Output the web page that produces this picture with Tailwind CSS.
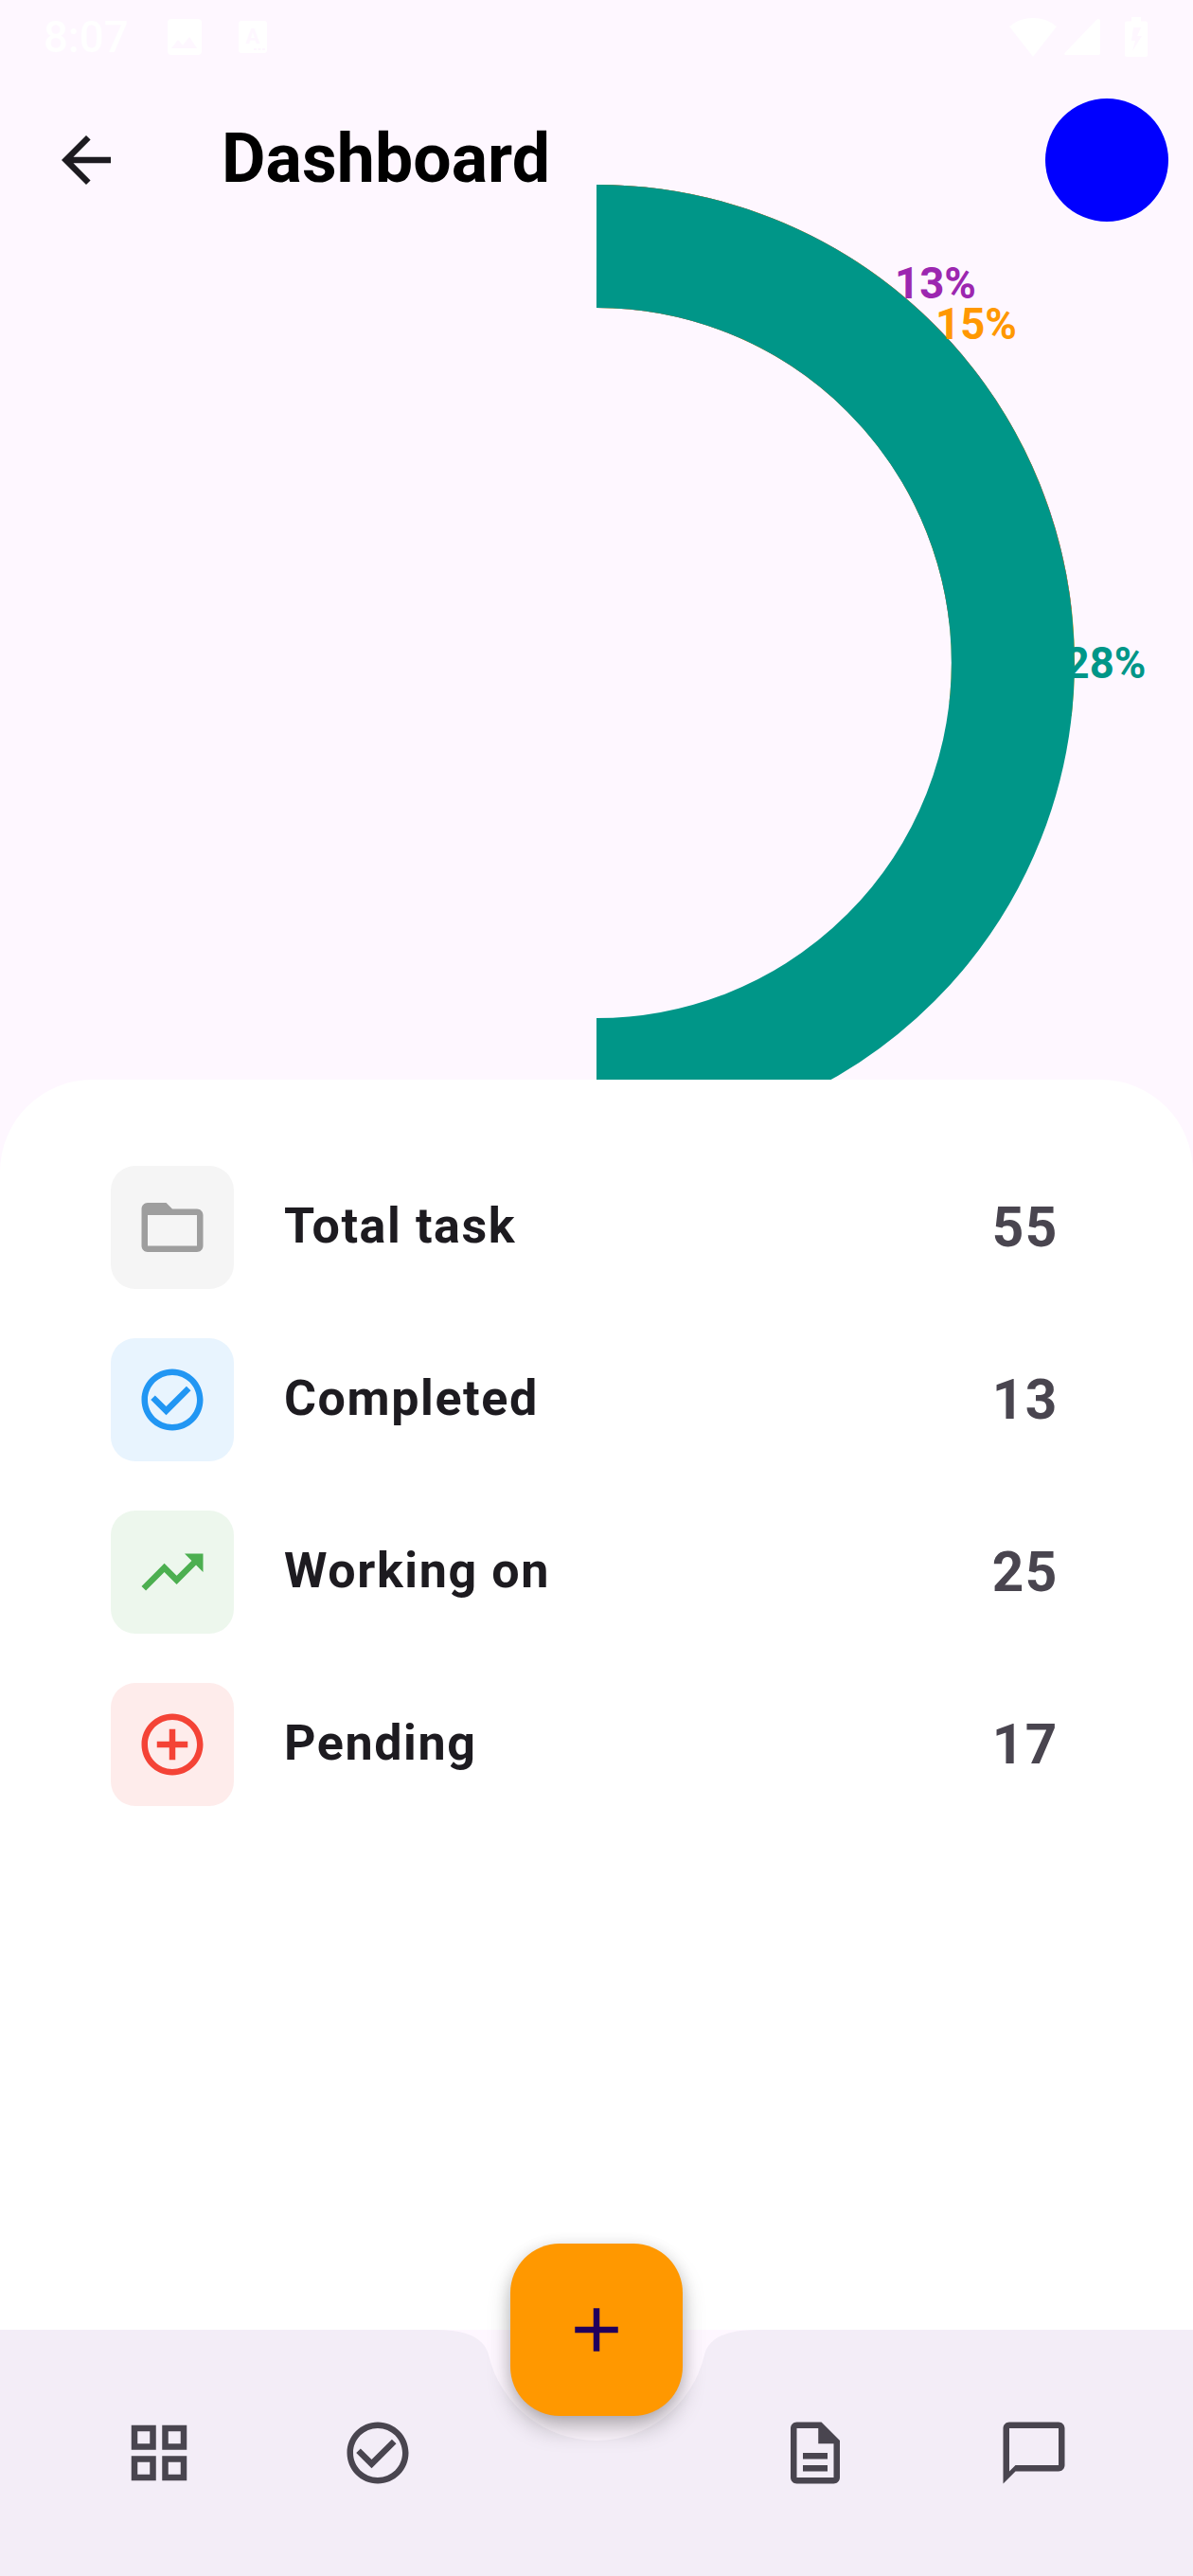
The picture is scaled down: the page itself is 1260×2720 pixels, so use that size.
<!DOCTYPE html>
<html lang="en">
<head>
<meta charset="utf-8">
<title>Dashboard</title>
<script src="https://cdn.jsdelivr.net/npm/@tailwindcss/browser@4"></script>
</head>
<body class="bg-[#fef7ff]">
<div class="flex h-[2720px] w-[1260px] flex-col overflow-hidden bg-[#fef7ff] font-['Roboto',sans-serif]">

  <!-- Status bar -->
  <div class="flex h-[78px] shrink-0 items-center text-white">
    <span class="ml-[46px] w-[92px] pt-[2px] text-[45.5px] leading-none font-medium">8:07</span>
    <svg class="ml-[39px] h-[38px] w-[36px]" viewBox="0 0 36 38" fill="currentColor"><path fill-rule="evenodd" d="M4 0h28a4 4 0 0 1 4 4v30a4 4 0 0 1-4 4H4a4 4 0 0 1-4-4V4a4 4 0 0 1 4-4zM4 31h27l-8-12-7 9-5-6z"/></svg>
    <svg class="ml-[39px] h-[34px] w-[30px]" viewBox="0 0 30 34"><rect width="30" height="34" rx="3" fill="#fff"/><text x="15" y="24" text-anchor="middle" font-family="Roboto, sans-serif" font-size="22" font-weight="700" fill="#fef7ff">A</text><path d="M16 29h3v2h-3zM20.500 29h3v2h-3zM25 29h3v2h-3z" fill="#fef7ff"/></svg>
    <svg class="ml-[784px] h-[41px] w-[50px]" viewBox="0 0 50 41" fill="currentColor"><path d="M25 41L0 9C14-3 36-3 50 9z"/></svg>
    <svg class="ml-[8px] h-[38px] w-[38px]" viewBox="0 0 38 38" fill="currentColor"><path d="M36 0q2 0 2 2v34q0 2-2 2H2q-3 0-1-2.500L34 1q1-1 2-1z"/></svg>
    <svg class="ml-[26px] h-[42px] w-[24px]" viewBox="0 0 24 42" fill="currentColor"><path fill-rule="evenodd" d="M7 0h10v4.500h5q2 0 2 2V40q0 2-2 2H2q-2 0-2-2V6.500q0-2 2-2h5zM9 11L7 25h4L8 36l10-16h-5l4-9z"/></svg>
  </div>

  <!-- App bar -->
  <header class="flex h-[182px] shrink-0 items-center pr-[26px] pl-[52px]">
    <svg class="size-[78px] fill-[#1d1b20]" viewBox="0 0 24 24"><path d="M20 11H7.830l5.590-5.590L12 4l-8 8 8 8 1.410-1.410L7.830 13H20v-2z"/></svg>
    <h1 class="ml-[104px] flex-1 pb-[3px] text-[71.500px] leading-none font-bold tracking-[0.1px] text-black">Dashboard</h1>
    <div class="size-[130px] rounded-full bg-[#0000ff]"></div>
  </header>

  <!-- Ring chart: each arc starts at twelve o'clock, the largest is drawn last -->
  <section class="h-[880px] shrink-0">
    <svg class="block h-[880px] w-[1260px] overflow-visible" viewBox="0 0 1260 880">
      <g font-family="Roboto, sans-serif" font-size="45.500" font-weight="700" text-anchor="middle">
        <path d="M630 0A440 440 0 0 1 1067.200 390.500" fill="none" stroke="#9c27b0" stroke-width="130"/>
        <path d="M630 0A440 440 0 0 1 1067.200 489" fill="none" stroke="#ff9800" stroke-width="130"/>
        <path d="M630 0A440 440 0 0 1 630 880" fill="none" stroke="#009688" stroke-width="130"/>
        <text x="988" y="54.700" fill="#9c27b0">13%</text>
        <text x="1031" y="98" fill="#ff9800">15%</text>
        <text x="1167.500" y="455.700" fill="#009688">28%</text>
      </g>
    </svg>
  </section>

  <!-- Summary sheet -->
  <main class="relative flex h-[1320px] shrink-0 flex-col gap-[52px] rounded-t-[97.500px] bg-white pt-[91px] pr-[142px] pl-[117px]">
    <div class="flex items-center">
      <div class="flex size-[130px] items-center justify-center rounded-[26px] bg-[#f5f5f5]">
        <svg class="size-[78px] fill-[#9e9e9e]" viewBox="0 0 24 24"><path d="M20 6h-8l-2-2H4c-1.100 0-1.990.9-1.990 2L2 18c0 1.100.9 2 2 2h16c1.100 0 2-.9 2-2V8c0-1.100-.9-2-2-2zm0 12H4V8h16v10z"/></svg>
      </div>
      <span class="ml-[53px] flex-1 pb-[2px] text-[52px] leading-none font-bold tracking-[1.6px] text-[#1d1b20]">Total task</span>
      <span class="text-[58.500px] leading-none font-bold tracking-[1.6px] text-[#49454f]">55</span>
    </div>
    <div class="flex items-center">
      <div class="flex size-[130px] items-center justify-center rounded-[26px] bg-[#e8f4fe]">
        <svg class="size-[78px] fill-[#2196f3]" viewBox="0 0 24 24"><path d="M16.590 7.580L10 14.170l-3.590-3.580L5 12l5 5 8-8zM12 2C6.480 2 2 6.480 2 12s4.480 10 10 10 10-4.480 10-10S17.520 2 12 2zm0 18c-4.420 0-8-3.580-8-8s3.580-8 8-8 8 3.580 8 8-3.580 8-8 8z"/></svg>
      </div>
      <span class="ml-[53px] flex-1 pb-[2px] text-[52px] leading-none font-bold tracking-[1.6px] text-[#1d1b20]">Completed</span>
      <span class="text-[58.500px] leading-none font-bold tracking-[1.6px] text-[#49454f]">13</span>
    </div>
    <div class="flex items-center">
      <div class="flex size-[130px] items-center justify-center rounded-[26px] bg-[#edf7ed]">
        <svg class="size-[78px] fill-[#4caf50]" viewBox="0 0 24 24"><path d="M16 6l2.290 2.290-4.880 4.880-4-4L2 16.590 3.410 18l6-6 4 4 6.300-6.290L22 12V6z"/></svg>
      </div>
      <span class="ml-[53px] flex-1 pb-[2px] text-[52px] leading-none font-bold tracking-[1.6px] text-[#1d1b20]">Working on</span>
      <span class="text-[58.500px] leading-none font-bold tracking-[1.6px] text-[#49454f]">25</span>
    </div>
    <div class="flex items-center">
      <div class="flex size-[130px] items-center justify-center rounded-[26px] bg-[#feeceb]">
        <svg class="size-[78px] fill-[#f44336]" viewBox="0 0 24 24"><path d="M13 7h-2v4H7v2h4v4h2v-4h4v-2h-4V7zm-1-5C6.480 2 2 6.480 2 12s4.480 10 10 10 10-4.480 10-10S17.520 2 12 2zm0 18c-4.410 0-8-3.590-8-8s3.590-8 8-8 8 3.590 8 8-3.590 8-8 8z"/></svg>
      </div>
      <span class="ml-[53px] flex-1 pb-[2px] text-[52px] leading-none font-bold tracking-[1.6px] text-[#1d1b20]">Pending</span>
      <span class="text-[58.500px] leading-none font-bold tracking-[1.6px] text-[#49454f]">17</span>
    </div>
  </main>

  <!-- Bottom bar, notched around the floating button -->
  <nav class="relative h-[260px] shrink-0">
    <svg class="absolute inset-0 h-[260px] w-[1260px]" viewBox="0 0 1260 260"><path d="M0 0H461Q509.750 0 516.160 27A117 117 0 0 0 743.840 27Q750.250 0 799 0H1260V260H0Z" fill="#f3edf7"/></svg>
    <div class="relative flex h-full items-center px-[52px]">
      <div class="flex flex-1 justify-center"><svg class="size-[78px] fill-[#49454f]" viewBox="0 0 24 24"><path fill-rule="evenodd" d="M3 3v8h8V3H3zm6 6H5V5h4v4zm-6 4v8h8v-8H3zm6 6H5v-4h4v4zm4-16v8h8V3h-8zm6 6h-4V5h4v4zm-6 4v8h8v-8h-8zm6 6h-4v-4h4v4z"/></svg></div>
      <div class="flex flex-1 justify-center"><svg class="size-[78px] fill-[#49454f]" viewBox="0 0 24 24"><path d="M16.590 7.580L10 14.170l-3.590-3.580L5 12l5 5 8-8zM12 2C6.480 2 2 6.480 2 12s4.480 10 10 10 10-4.480 10-10S17.520 2 12 2zm0 18c-4.420 0-8-3.580-8-8s3.580-8 8-8 8 3.580 8 8-3.580 8-8 8z"/></svg></div>
      <div class="flex-1"></div>
      <div class="flex flex-1 justify-center"><svg class="size-[78px] fill-[#49454f]" viewBox="0 0 24 24"><path d="M8 16h8v2H8zm0-4h8v2H8zm6-10H6c-1.100 0-2 .9-2 2v16c0 1.100.89 2 1.990 2H18c1.100 0 2-.9 2-2V8l-6-6zm4 18H6V4h7v5h5v11z"/></svg></div>
      <div class="flex flex-1 justify-center"><svg class="size-[78px] fill-[#49454f]" viewBox="0 0 24 24"><path d="M20 2H4c-1.100 0-2 .9-2 2v18l4-4h14c1.100 0 2-.9 2-2V4c0-1.100-.9-2-2-2zm0 14H6l-2 2V4h16v12z"/></svg></div>
    </div>
    <button class="absolute top-[-91px] left-[539px] flex size-[182px] items-center justify-center rounded-[52px] bg-[#ff9800] shadow-[0_14px_26px_-2px_rgba(0,0,0,0.28),0_2px_16px_rgba(0,0,0,0.12)]">
      <svg class="size-[78px] fill-[#21005d]" viewBox="0 0 24 24"><path d="M19 13h-6v6h-2v-6H5v-2h6V5h2v6h6v2z"/></svg>
    </button>
  </nav>
</div>
</body>
</html>
